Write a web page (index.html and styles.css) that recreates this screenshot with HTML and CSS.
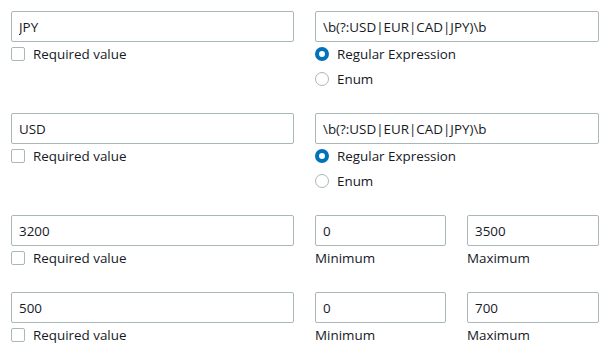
FILE: index.html
```html
<!DOCTYPE html>
<html lang="en">
<head>
  <meta charset="UTF-8" />
  <title>Parameter constraints</title>
  <link rel="stylesheet" href="styles.css">
</head>
<body>

  <div class="rules">

    <div class="row">
      <div class="field">
        <input class="text" type="text" value="JPY">
        <label class="check"><span class="box"></span>Required value</label>
      </div>
      <div class="field">
        <input class="text" type="text" value="\b(?:USD|EUR|CAD|JPY)\b">
        <label class="option"><span class="radio on"></span>Regular Expression</label>
        <label class="option"><span class="radio"></span>Enum</label>
      </div>
    </div>

    <div class="row">
      <div class="field">
        <input class="text" type="text" value="USD">
        <label class="check"><span class="box"></span>Required value</label>
      </div>
      <div class="field">
        <input class="text" type="text" value="\b(?:USD|EUR|CAD|JPY)\b">
        <label class="option"><span class="radio on"></span>Regular Expression</label>
        <label class="option"><span class="radio"></span>Enum</label>
      </div>
    </div>

    <div class="row short">
      <div class="field">
        <input class="text" type="text" value="3200">
        <label class="check"><span class="box"></span>Required value</label>
      </div>
      <div class="range">
        <div class="field">
          <input class="text" type="text" value="0">
          <span class="hint">Minimum</span>
        </div>
        <div class="field">
          <input class="text" type="text" value="3500">
          <span class="hint">Maximum</span>
        </div>
      </div>
    </div>

    <div class="row short">
      <div class="field">
        <input class="text" type="text" value="500">
        <label class="check"><span class="box"></span>Required value</label>
      </div>
      <div class="range">
        <div class="field">
          <input class="text" type="text" value="0">
          <span class="hint">Minimum</span>
        </div>
        <div class="field">
          <input class="text" type="text" value="700">
          <span class="hint">Maximum</span>
        </div>
      </div>
    </div>

  </div>

</body>
</html>
```

FILE: styles.css
```css
body {
  margin: 0;
  background: #ffffff;
  color: #16191f;
  font-family: "Open Sans", "Liberation Sans", sans-serif;
  font-size: 13.4px;
}

.rules {
  display: flex;
  flex-direction: column;
  gap: 21px;
  padding: 11px 0 0 11px;
}

.row {
  display: grid;
  grid-template-columns: 283px 284px;
  column-gap: 21px;
}

.field {
  display: flex;
  flex-direction: column;
}

.range {
  display: grid;
  grid-template-columns: 131px 132px;
  column-gap: 21px;
}

.text {
  box-sizing: border-box;
  height: 31px;
  width: 100%;
  margin: 0;
  padding: 0 7px;
  border: 1px solid #aab7b8;
  border-radius: 2px;
  font-family: inherit;
  font-size: 13.4px;
  color: #16191f;
  background: #fff;
  outline: none;
}

.check,
.option {
  display: flex;
  align-items: center;
  height: 25px;
  margin-top: -1px;
  margin-bottom: 1px;
}

.box {
  box-sizing: border-box;
  width: 14px;
  height: 14px;
  border: 1px solid #aab7b8;
  border-radius: 2px;
  margin-right: 8px;
}

.radio {
  box-sizing: border-box;
  width: 14px;
  height: 14px;
  border: 1px solid #aab7b8;
  border-radius: 50%;
  margin-right: 8px;
  background: #fff;
}

.radio.on {
  border: 4px solid #0073bb;
}

.hint {
  display: flex;
  align-items: center;
  height: 24px;
}
```
